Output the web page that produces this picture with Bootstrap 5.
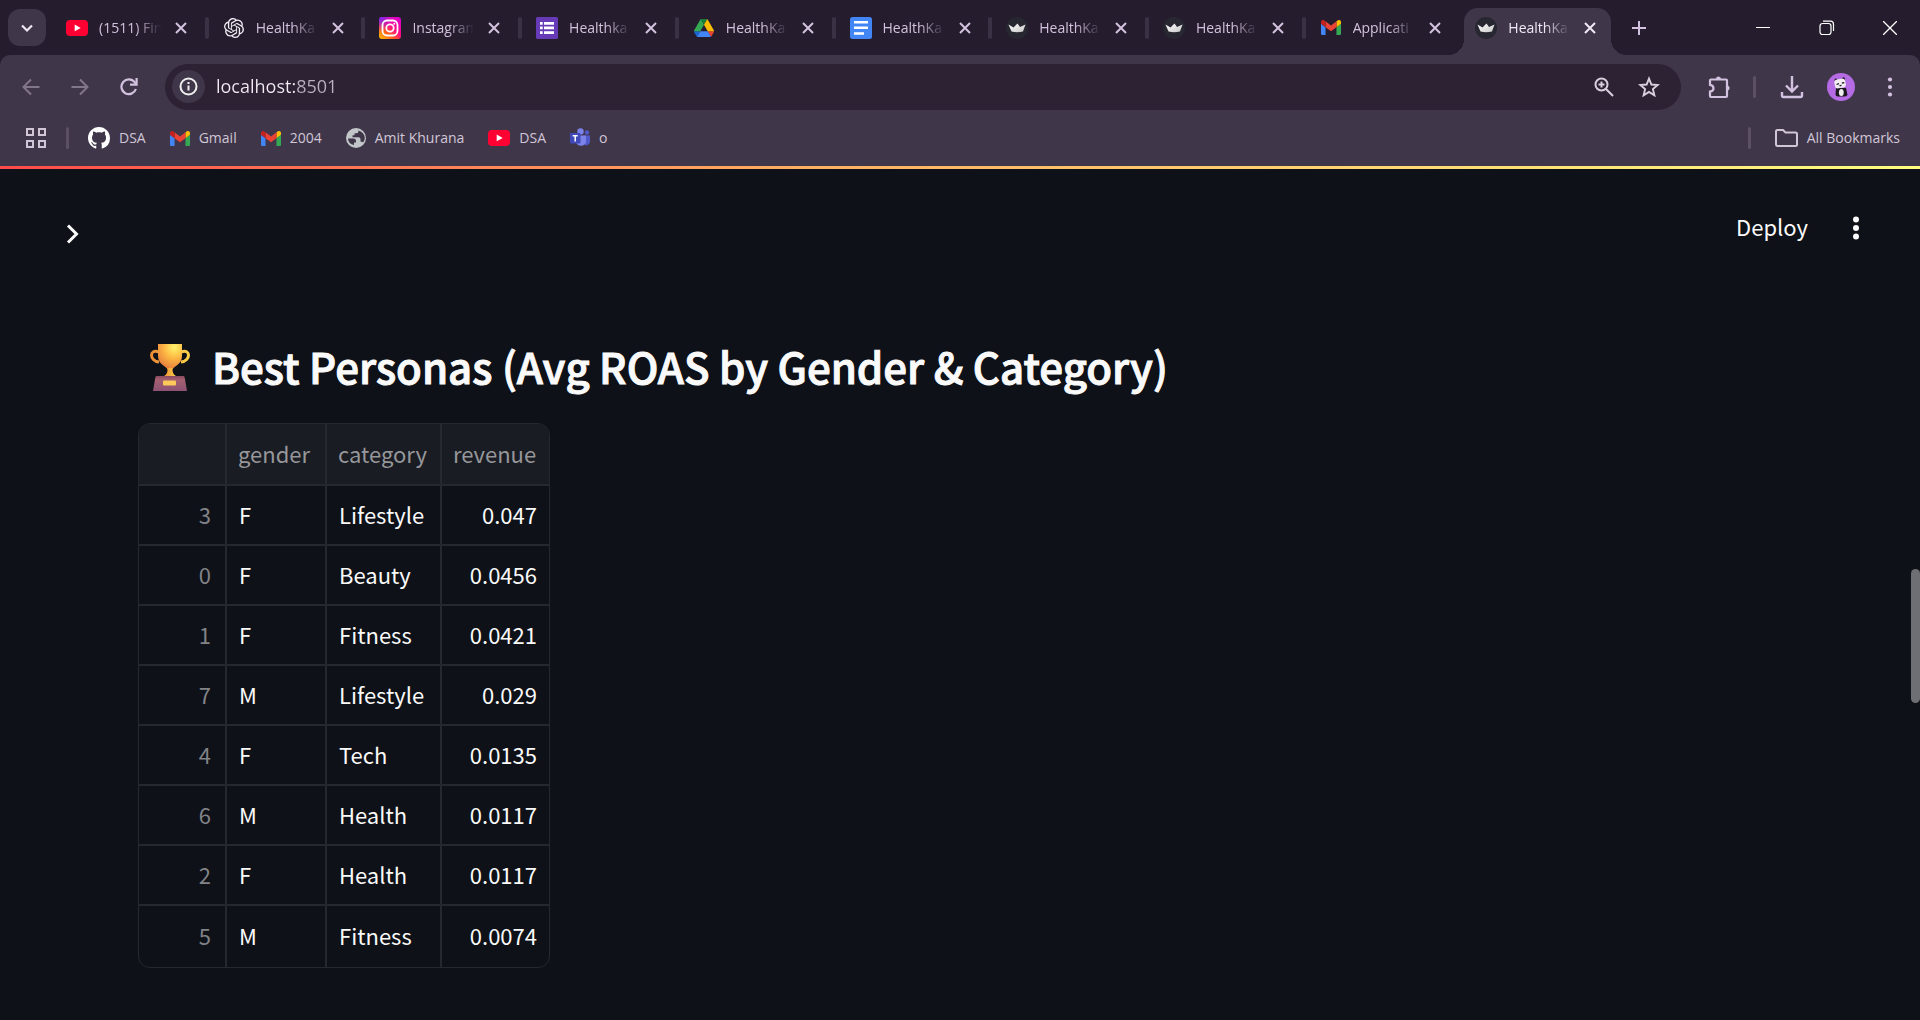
<!DOCTYPE html>
<html lang="en">
<head>
<meta charset="utf-8">
<meta name="viewport" content="width=device-width, initial-scale=1">
<title>HealthKart</title>
<link href="https://cdn.jsdelivr.net/npm/bootstrap@5.3.0/dist/css/bootstrap.min.css" rel="stylesheet">
<style>
:root{--strip:#251d2d;--bar:#40364a;--field:#2c2233;--lilac:#d3c2df;--page:#0e1117;--line:#25282d}
body{background:var(--page);color:#fafafa;font-family:"Open Sans","Noto Sans",sans-serif;font-size:14px;line-height:20px;overflow:hidden}
button{background:none;border:0;padding:0;color:inherit}
svg{display:block;flex:none}
.tabstrip{background:var(--strip);height:55px;color:var(--lilac)}
.tab-search{width:38px;height:37px;border-radius:12px;background:var(--bar);color:#eee6f3;margin:9px 6px 0 8px}
.browser-tab{flex:1 1 0;min-width:0;height:55px;position:relative}
.tab-main{height:55px;padding-left:14px;gap:11px}
.tab-title{width:70px;white-space:nowrap;text-align:left;-webkit-mask-image:linear-gradient(90deg,#000 36px,transparent 62px);mask-image:linear-gradient(90deg,#000 36px,transparent 62px)}
.tab-x{width:24px;height:24px}
.tab-sep{width:4px;height:22px;border-radius:2px;background:#3b3144}
.browser-tab.current .tab-shape{position:absolute;inset:8px 8px 0 2px;background:var(--bar);border-radius:14px 14px 0 0}
.tab-shape::before,.tab-shape::after{content:"";position:absolute;bottom:0;width:16px;height:16px}
.tab-shape::before{right:100%;background:radial-gradient(circle at 0 0,transparent 16px,var(--bar) 16px)}
.tab-shape::after{left:100%;background:radial-gradient(circle at 100% 0,transparent 16px,var(--bar) 16px)}
.current .tab-main,.current .tab-x{position:relative;color:#f0e8f5}
.current .tab-main{padding-left:13px}
.strip-end{width:301px}
.plus-btn{width:40px}
.win-btn{width:64px;height:55px;color:#fff}
.win-btn:last-child{width:61px}
.chrome-bars{background:var(--strip)}
.bars-inner{background:var(--bar);border-radius:10px 10px 0 0;height:111px}
.toolbar{height:65px;padding-bottom:2px;padding-left:6px;color:var(--lilac)}
.nav-btn{width:49px;height:40px}
.faded{color:#82768c}
.omnibox{height:46px;border-radius:23px;background:var(--field);margin-left:12px;padding:0 10px 0 7px;color:#d9d0de}
.site-info{width:33px;height:33px;border-radius:50%;background:var(--bar);color:#eee}
.address{border:0;outline:0;padding:0 0 1px 11px;background:linear-gradient(90deg,#f0ebf3 91px,#b9b0c1 91px);-webkit-background-clip:text;background-clip:text;color:transparent;font-size:18px;line-height:24px;min-width:0}
.end-btn{width:45px;height:40px}
.toolbar-end{width:239px;padding-left:15px}
.toolbar-end .divider{margin:0 13px 0 12px}
.divider{width:3px;height:22px;border-radius:2px;background:#5b5066}
.bookmarks{height:36px;color:#d0c6d6;padding-left:26px;padding-right:20px}
.bookmarks .apps-div{margin:0 19px 0 20px}
.bookmarks a{color:inherit;text-decoration:none;gap:9px}
.bookmark-set{gap:24px}
.load-line{height:3px;background:linear-gradient(90deg,#ff4b4b,#ffaf62 42%,#fffd80)}
.app-view{font-family:"Noto Sans CJK JP","Noto Sans",sans-serif}
.app-bar{height:118px;padding:0 54px 0 61px}
.expand-btn{margin-top:12px}
.app-actions{gap:38px}
.deploy{font-size:22px;line-height:32px;padding-bottom:4px}
.content-block{padding:57px 138px 0}
.block-title{font-size:42px;line-height:44px;font-weight:500;gap:22px;padding-left:12px;margin-bottom:31px;-webkit-text-stroke:1px #fafafa}
.grid-frame{border:1px solid var(--line);border-radius:12px;overflow:hidden;width:max-content}
.data-grid{border-collapse:separate;border-spacing:0;font-size:22px;line-height:30px}
.data-grid th,.data-grid td{height:60px;padding:0 12px 3px;border-right:2px solid var(--line);border-bottom:2px solid var(--line);font-weight:400;vertical-align:middle}
.data-grid thead th{height:62px;background:#1a1c23;color:#96979a;padding:0 11px 2px}
.data-grid tbody th{color:#818387;text-align:right;padding-right:14px}
.data-grid tr>:last-child{border-right:0}
.data-grid tbody tr:last-child>*{border-bottom:0;height:61px}
.data-grid td:last-child{text-align:right}
.scroll-thumb{position:fixed;right:0;top:569px;width:9px;height:134px;border-radius:5px;background:#6d6f74}
</style>
<script src="https://cdn.jsdelivr.net/npm/bootstrap@5.3.0/dist/js/bootstrap.bundle.min.js"></script>
</head>
<body>
<svg width="0" height="0" class="position-absolute" aria-hidden="true">
<defs>
<linearGradient id="insta" x1="0" y1="1" x2=".9" y2="0"><stop offset="0" stop-color="#ffc400"/><stop offset=".35" stop-color="#ff5a1f"/><stop offset=".6" stop-color="#ff0a8a"/><stop offset="1" stop-color="#d800d0"/></linearGradient>
<radialGradient id="insta2" cx="0" cy="0" r=".7"><stop offset="0" stop-color="#5b2bff"/><stop offset="1" stop-color="#9b20ff" stop-opacity="0"/></radialGradient>
<linearGradient id="silver" x1="0" x2="1" y1="0" y2="1"><stop offset="0" stop-color="#fff"/><stop offset="1" stop-color="#c8c8c8"/></linearGradient>
<radialGradient id="gold" cx=".68" cy=".12" r=".85"><stop offset="0" stop-color="#fff56b"/><stop offset=".5" stop-color="#fdb843"/><stop offset="1" stop-color="#e8803e"/></radialGradient>
<linearGradient id="handle" x1="0" x2="1"><stop offset="0" stop-color="#ea8c36"/><stop offset="1" stop-color="#fdd14a"/></linearGradient>
<linearGradient id="base" x1="0" y1="0" x2="0" y2="1"><stop offset="0" stop-color="#8a4a62"/><stop offset=".25" stop-color="#a4606f"/><stop offset="1" stop-color="#8c5175"/></linearGradient>
<symbol id="i-x" viewBox="0 0 12 12"><path d="M1 1l10 10M11 1L1 11" stroke="currentColor" stroke-width="2" fill="none"/></symbol>
<symbol id="i-yt" viewBox="0 0 22 16"><rect width="22" height="16" rx="4" fill="#ff0033"/><path d="M8.700 4.600v6.600l6-3.300z" fill="#fff"/></symbol>
<symbol id="i-gmail" viewBox="52 42 88 66"><path fill="#4285f4" d="M58 108h14V74L52 59v43c0 3.320 2.690 6 6 6"/><path fill="#34a853" d="M120 108h14c3.320 0 6-2.690 6-6V59l-20 15"/><path fill="#fbbc04" d="M120 48v26l20-15v-8c0-7.420-8.470-11.650-14.400-7.200"/><path fill="#ea4335" d="M72 74V48l24 18 24-18v26L96 92"/><path fill="#c5221f" d="M52 51v8l20 15V48l-5.600-4.200c-5.940-4.450-14.400-.220-14.400 7.200"/></symbol>
<symbol id="i-crown" viewBox="0 0 22 22"><circle cx="11" cy="11" r="11" fill="#262730"/><path d="M2.500 7.500L7.500 10.500 11.500 6.500 14 10 19.500 7.500 17 14.500Q11 16 5.500 14.500z" fill="url(#silver)"/></symbol>
</defs>
</svg>

<header>
<nav class="tabstrip d-flex" aria-label="Open tabs">
<button class="tab-search d-flex align-items-center justify-content-center" aria-label="Search tabs"><svg width="14" height="14" viewBox="0 0 14 14"><path d="M2 4.500l5 5 5-5" fill="none" stroke="currentColor" stroke-width="2.200"/></svg></button>

<div class="browser-tab d-flex align-items-center"><button class="tab-main d-flex align-items-center"><svg width="22" height="16"><use href="#i-yt"/></svg><span class="tab-title">(1511) Fin</span></button><button class="tab-x d-flex align-items-center justify-content-center" aria-label="Close tab"><svg width="12" height="12"><use href="#i-x"/></svg></button><span class="tab-sep ms-auto"></span></div>

<div class="browser-tab d-flex align-items-center"><button class="tab-main d-flex align-items-center"><svg width="22" height="20" viewBox="0 0 24 24" fill="#f4eef7"><path d="M22.2819 9.8211a5.9847 5.9847 0 0 0-.5157-4.9108 6.0462 6.0462 0 0 0-6.5098-2.9A6.0651 6.0651 0 0 0 4.9807 4.1818a5.9847 5.9847 0 0 0-3.9977 2.9 6.0462 6.0462 0 0 0 .7427 7.0966 5.98 5.98 0 0 0 .511 4.9107 6.051 6.051 0 0 0 6.5146 2.9001A5.9847 5.9847 0 0 0 13.2599 24a6.0557 6.0557 0 0 0 5.7718-4.2058 5.9894 5.9894 0 0 0 3.9977-2.9001 6.0557 6.0557 0 0 0-.7475-7.0729zm-9.022 12.6081a4.4755 4.4755 0 0 1-2.8764-1.0408l.1419-.0804 4.7783-2.7582a.7948.7948 0 0 0 .3927-.6813v-6.7369l2.02 1.1686a.071.071 0 0 1 .038.052v5.5826a4.504 4.504 0 0 1-4.4945 4.4944zm-9.6607-4.1254a4.4708 4.4708 0 0 1-.5346-3.0137l.142.0852 4.783 2.7582a.7712.7712 0 0 0 .7806 0l5.8428-3.3685v2.3324a.0804.0804 0 0 1-.0332.0615L9.74 19.9502a4.4992 4.4992 0 0 1-6.1408-1.6464zM2.3408 7.8956a4.485 4.485 0 0 1 2.3655-1.9728V11.6a.7664.7664 0 0 0 .3879.6765l5.8144 3.3543-2.0201 1.1685a.0757.0757 0 0 1-.071 0l-4.8303-2.7865A4.504 4.504 0 0 1 2.3408 7.872zm16.5963 3.8558L13.1038 8.364 15.1192 7.2a.0757.0757 0 0 1 .071 0l4.8303 2.7913a4.4944 4.4944 0 0 1-.6765 8.1042v-5.6772a.79.79 0 0 0-.407-.667zm2.0107-3.0231l-.142-.0852-4.7735-2.7818a.7759.7759 0 0 0-.7854 0L9.409 9.2297V6.8974a.0662.0662 0 0 1 .0284-.0615l4.8303-2.7866a4.4992 4.4992 0 0 1 6.6802 4.66zM8.3065 12.863l-2.02-1.1638a.0804.0804 0 0 1-.038-.0567V6.0742a4.4992 4.4992 0 0 1 7.3757-3.4537l-.142.0805L8.704 5.459a.7948.7948 0 0 0-.3927.6813zm1.0976-2.3654l2.602-1.4998 2.6069 1.4998v2.9994l-2.5974 1.4997-2.6067-1.4997Z"/></svg><span class="tab-title">HealthKa</span></button><button class="tab-x d-flex align-items-center justify-content-center" aria-label="Close tab"><svg width="12" height="12"><use href="#i-x"/></svg></button><span class="tab-sep ms-auto"></span></div>

<div class="browser-tab d-flex align-items-center"><button class="tab-main d-flex align-items-center"><svg width="22" height="22" viewBox="0 0 22 22"><rect width="22" height="22" rx="3" fill="url(#insta)"/><rect width="22" height="22" rx="3" fill="url(#insta2)"/><g fill="none" stroke="#fff" stroke-width="1.800"><rect x="3.500" y="3.500" width="15" height="15" rx="4.500"/><circle cx="11" cy="11" r="3.700"/></g><circle cx="15.300" cy="6.700" r="1" fill="#fff"/></svg><span class="tab-title">Instagram</span></button><button class="tab-x d-flex align-items-center justify-content-center" aria-label="Close tab"><svg width="12" height="12"><use href="#i-x"/></svg></button><span class="tab-sep ms-auto"></span></div>

<div class="browser-tab d-flex align-items-center"><button class="tab-main d-flex align-items-center"><svg width="22" height="22" viewBox="0 0 22 22"><rect width="22" height="22" rx="1.500" fill="#673ab7"/><path d="M4 5h2.700v2.700H4zM8 5h10v2.700H8zM4 9.600h2.700v2.700H4zM8 9.600h10v2.700H8zM4 14.200h2.700v2.700H4zM8 14.200h10v2.700H8z" fill="#fff"/></svg><span class="tab-title">Healthka</span></button><button class="tab-x d-flex align-items-center justify-content-center" aria-label="Close tab"><svg width="12" height="12"><use href="#i-x"/></svg></button><span class="tab-sep ms-auto"></span></div>

<div class="browser-tab d-flex align-items-center"><button class="tab-main d-flex align-items-center"><svg width="22" height="18" viewBox="0 0 87.3 78"><path d="m6.600 66.850 3.850 6.650c.8 1.400 1.950 2.500 3.300 3.300l13.750-23.800h-27.500c0 1.550.4 3.100 1.200 4.500z" fill="#1967d2"/><path d="m43.650 25-13.750-23.800c-1.350.8-2.500 1.900-3.300 3.300l-25.400 44a9.060 9.060 0 0 0 -1.200 4.500h27.500z" fill="#34a853"/><path d="m73.550 76.800c1.350-.8 2.500-1.900 3.300-3.300l1.600-2.750 7.650-13.250c.8-1.400 1.200-2.950 1.200-4.500h-27.500l5.850 11.500z" fill="#ea4335"/><path d="m43.650 25 13.750-23.800c-1.350-.8-2.900-1.200-4.500-1.200h-18.500c-1.600 0-3.150.45-4.500 1.200z" fill="#188038"/><path d="m59.800 53h-32.300l-13.750 23.800c1.350.8 2.900 1.200 4.500 1.200h50.800c1.600 0 3.150-.45 4.500-1.200z" fill="#4285f4"/><path d="m73.400 26.500-12.700-22c-.8-1.400-1.950-2.500-3.300-3.300l-13.750 23.800 16.150 28h27.450c0-1.550-.4-3.100-1.200-4.500z" fill="#fbbc04"/></svg><span class="tab-title">HealthKa</span></button><button class="tab-x d-flex align-items-center justify-content-center" aria-label="Close tab"><svg width="12" height="12"><use href="#i-x"/></svg></button><span class="tab-sep ms-auto"></span></div>

<div class="browser-tab d-flex align-items-center"><button class="tab-main d-flex align-items-center"><svg width="22" height="22" viewBox="0 0 22 22"><rect width="22" height="22" rx="2.500" fill="#4285f4"/><path d="M4 4h14v2.500H4zM4 9.600h14v2.500H4zM4 15.200h10v2.500H4z" fill="#fff"/></svg><span class="tab-title">HealthKa</span></button><button class="tab-x d-flex align-items-center justify-content-center" aria-label="Close tab"><svg width="12" height="12"><use href="#i-x"/></svg></button><span class="tab-sep ms-auto"></span></div>

<div class="browser-tab d-flex align-items-center"><button class="tab-main d-flex align-items-center"><svg width="22" height="22"><use href="#i-crown"/></svg><span class="tab-title">HealthKa</span></button><button class="tab-x d-flex align-items-center justify-content-center" aria-label="Close tab"><svg width="12" height="12"><use href="#i-x"/></svg></button><span class="tab-sep ms-auto"></span></div>

<div class="browser-tab d-flex align-items-center"><button class="tab-main d-flex align-items-center"><svg width="22" height="22"><use href="#i-crown"/></svg><span class="tab-title">HealthKa</span></button><button class="tab-x d-flex align-items-center justify-content-center" aria-label="Close tab"><svg width="12" height="12"><use href="#i-x"/></svg></button><span class="tab-sep ms-auto"></span></div>

<div class="browser-tab d-flex align-items-center"><button class="tab-main d-flex align-items-center"><svg width="22" height="15"><use href="#i-gmail"/></svg><span class="tab-title">Applicati</span></button><button class="tab-x d-flex align-items-center justify-content-center" aria-label="Close tab"><svg width="12" height="12"><use href="#i-x"/></svg></button></div>

<div class="browser-tab current d-flex align-items-center"><span class="tab-shape"></span><button class="tab-main d-flex align-items-center"><svg width="22" height="22"><use href="#i-crown"/></svg><span class="tab-title">HealthKa</span></button><button class="tab-x d-flex align-items-center justify-content-center" aria-label="Close tab"><svg width="12" height="12"><use href="#i-x"/></svg></button></div>

<div class="strip-end d-flex align-items-center">
<button class="plus-btn d-flex justify-content-center" aria-label="New tab"><svg width="14" height="14" viewBox="0 0 14 14"><path d="M7 0v14M0 7h14" stroke="currentColor" stroke-width="2"/></svg></button>
<button class="win-btn ms-auto d-flex align-items-center justify-content-center" aria-label="Minimize"><svg width="14" height="14" viewBox="0 0 14 14"><path d="M0 6.500h14" stroke="currentColor"/></svg></button>
<button class="win-btn d-flex align-items-center justify-content-center" aria-label="Restore"><svg width="16" height="16" viewBox="0 0 16 16" fill="none" stroke="currentColor" stroke-width="1.200"><rect x="1" y="3.500" width="11" height="11" rx="2.500"/><path d="M4 1.200h7.500a3 3 0 0 1 3 3V11"/></svg></button>
<button class="win-btn d-flex align-items-center justify-content-center" aria-label="Close window"><svg width="14" height="14" viewBox="0 0 14 14"><path d="M0 0l14 14M14 0L0 14" stroke="currentColor" stroke-width="1.300"/></svg></button>
</div>
</nav>

<div class="chrome-bars"><div class="bars-inner">
<div class="toolbar d-flex align-items-center">
<div class="d-flex">
<button class="nav-btn faded d-flex align-items-center justify-content-center" aria-label="Back"><svg width="18" height="18" viewBox="0 0 18 18" fill="none" stroke="currentColor" stroke-width="2"><path d="M17.500 9H2M9 1.500L1.500 9 9 16.500"/></svg></button>
<button class="nav-btn faded d-flex align-items-center justify-content-center" aria-label="Forward"><svg width="18" height="18" viewBox="0 0 18 18" fill="none" stroke="currentColor" stroke-width="2"><path d="M.5 9H16M9 1.500L16.500 9 9 16.500"/></svg></button>
<button class="nav-btn d-flex align-items-center justify-content-center" aria-label="Reload"><svg width="18" height="18" viewBox="0 0 18 18" fill="none" stroke="currentColor" stroke-width="2.200"><path d="M15.900 11A7.400 7.400 0 1 1 14.700 4.200L16 6"/><path d="M16.600 0v6.600H10"/></svg></button>
</div>
<div class="omnibox d-flex align-items-center flex-grow-1">
<button class="site-info d-flex align-items-center justify-content-center" aria-label="View site information"><svg width="19" height="19" viewBox="0 0 19 19" fill="none" stroke="currentColor" stroke-width="2"><circle cx="9.500" cy="9.500" r="8"/><path d="M9.500 8.500v5M9.500 5v2"/></svg></button>
<input class="address flex-grow-1" type="text" aria-label="Address" value="localhost:8501">
<button class="end-btn d-flex align-items-center justify-content-center" aria-label="Zoom"><svg width="20" height="20" viewBox="0 0 20 20" fill="none" stroke="currentColor" stroke-width="2"><circle cx="7.500" cy="7.500" r="6"/><path d="M12 12l7 7M7.500 4.500v6M4.500 7.500h6"/></svg></button>
<button class="end-btn d-flex align-items-center justify-content-center" aria-label="Bookmark this page"><svg width="22" height="21" viewBox="0 0 22 21" fill="none" stroke="currentColor" stroke-width="1.900"><path d="M11 2.600l2.400 5.900 6.300.5-4.800 4.100 1.500 6.200L11 15.900l-5.400 3.400 1.500-6.200L2.300 9l6.300-.5z"/></svg></button>
</div>
<div class="toolbar-end d-flex align-items-center">
<button class="d-flex justify-content-center end-btn align-items-center" aria-label="Extensions"><svg width="24" height="24" viewBox="0 0 24 24"><path d="M9 4a2.500 2.500 0 0 1 5 0zM20 10.500a2.500 2.500 0 0 1 0 5z" fill="currentColor"/><path d="M4 4.500h15q1 0 1 1v15.500q0 1-1 1H4q-1 0-1-1v-4.500q3.500-.5 3.500-3.300T3 9.900V5.500q0-1 1-1z" fill="none" stroke="currentColor" stroke-width="2.200"/></svg></button>
<span class="divider"></span>
<button class="end-btn d-flex align-items-center justify-content-center" aria-label="Downloads"><svg width="24" height="24" viewBox="0 0 24 24" fill="none" stroke="currentColor" stroke-width="2.400"><path d="M12 1v15M6 10.500l6 6 6-6M2 17v3.500q0 1.500 1.500 1.500h17q1.500 0 1.500-1.500V17"/></svg></button>
<button class="ms-1 end-btn d-flex align-items-center justify-content-center" aria-label="Profile"><svg width="28" height="28" viewBox="0 0 28 28"><circle cx="14" cy="14" r="14" fill="#b56be3"/><path d="M9 15h10l1.500 7q-1.500 2-5 1.500h-4q-2.500.5-3-2z" fill="#1d1720"/><ellipse cx="14.300" cy="19.500" rx="2.400" ry="3.500" fill="#eee"/><circle cx="9" cy="7" r="1.500" fill="#1d1720"/><circle cx="16.500" cy="5.800" r="1.500" fill="#1d1720"/><rect x="7.500" y="6" width="11" height="9" rx="3" fill="#f2eef2" transform="rotate(-10 13 10)"/><path d="M9.500 11.500l2.500-.8M14.800 10.200l2.500-.6M12.500 12.800l2-.4" stroke="#1d1720" stroke-width="1.300"/></svg></button>
<button class="end-btn ms-1 d-flex align-items-center justify-content-center" aria-label="Browser menu"><svg width="6" height="20" viewBox="0 0 6 20" fill="currentColor"><circle cx="3" cy="2.500" r="2.100"/><circle cx="3" cy="10" r="2.100"/><circle cx="3" cy="17.500" r="2.100"/></svg></button>
</div>
</div>

<nav class="bookmarks d-flex align-items-center" aria-label="Bookmarks">
<button aria-label="Apps"><svg width="20" height="20" viewBox="0 0 20 20" fill="none" stroke="currentColor" stroke-width="2"><path d="M1 1h6v6H1zM13 1h6v6h-6zM1 13h6v6H1zM13 13h6v6h-6z"/></svg></button>
<span class="divider apps-div"></span>
<div class="bookmark-set d-flex align-items-center">
<a href="#" class="d-flex align-items-center"><svg width="22" height="22" viewBox="0 0 16 16" fill="#fff"><path d="M8 0C3.580 0 0 3.580 0 8c0 3.540 2.290 6.530 5.470 7.590.4.070.55-.17.55-.38 0-.19-.01-.82-.01-1.490-2.010.37-2.530-.49-2.690-.94-.09-.23-.48-.94-.82-1.130-.28-.15-.68-.52-.01-.53.63-.01 1.080.58 1.230.82.72 1.210 1.870.87 2.330.66.07-.52.28-.87.51-1.070-1.780-.2-3.640-.89-3.640-3.950 0-.87.31-1.590.82-2.150-.08-.2-.36-1.020.08-2.120 0 0 .67-.21 2.200.82.64-.18 1.320-.27 2-.27s1.360.09 2 .27c1.530-1.040 2.200-.82 2.200-.82.44 1.100.16 1.920.08 2.120.51.56.82 1.270.82 2.150 0 3.070-1.870 3.750-3.650 3.950.29.25.54.73.54 1.480 0 1.070-.01 1.930-.01 2.200 0 .21.15.46.55.38A8.010 8.010 0 0 0 16 8c0-4.420-3.580-8-8-8"/></svg>DSA</a>
<a href="#" class="d-flex align-items-center"><svg width="20" height="15"><use href="#i-gmail"/></svg>Gmail</a>
<a href="#" class="d-flex align-items-center"><svg width="20" height="15"><use href="#i-gmail"/></svg>2004</a>
<a href="#" class="d-flex align-items-center"><svg width="20" height="20" viewBox="0 0 20 20"><circle cx="10" cy="10" r="10" fill="#c3c6c9"/><path d="M2 10.500h5.500q2.500 0 2.500 2.500v1.500H8V17q-5.500-1-6-6.500zM12.500 2.500v.8q0 2-2 2h-2v2h-2v2h6q2 0 2 2v2.500h1.300q1 0 1.400.8 3.500-5.500-.5-9.500-1.700-2-4.200-2.600z" fill="#40364a"/></svg>Amit Khurana</a>
<a href="#" class="d-flex align-items-center"><svg width="22" height="16"><use href="#i-yt"/></svg>DSA</a>
<a href="#" class="d-flex align-items-center"><svg width="20" height="20" viewBox="0 0 20 20"><circle cx="10.500" cy="3.500" r="3.200" fill="#7b83eb"/><circle cx="17" cy="4.500" r="2.200" fill="#5059c9"/><path d="M13 7.500h7v6a4 4 0 0 1-5 3.800z" fill="#5059c9"/><path d="M6 7.500h10V14a5.200 5.200 0 0 1-10 0z" fill="#7b83eb"/><rect y="5" width="10.500" height="10.500" rx="1" fill="#4049b8"/><path d="M2.700 7.800h5M5.200 8v5.500" stroke="#fff" stroke-width="1.500"/></svg>o</a>
</div>
<span class="divider ms-auto me-4"></span>
<a href="#" class="d-flex align-items-center"><svg width="23" height="18" viewBox="0 0 23 18" fill="none" stroke="currentColor" stroke-width="2"><path d="M1 15V2.500Q1 1 2.500 1H8l2.500 2.500h10Q22 3.500 22 5v10.500Q22 17 20.500 17h-18Q1 17 1 15z"/></svg>All Bookmarks</a>
</nav>
</div></div>
</header>

<div class="load-line"></div>
<main class="app-view">
<div class="app-bar d-flex align-items-center justify-content-between">
<button class="expand-btn" aria-label="Expand sidebar"><svg width="24" height="24" viewBox="0 0 24 24"><path d="M7 3.500l8.500 8.500L7 20.500" fill="none" stroke="currentColor" stroke-width="3"/></svg></button>
<div class="app-actions d-flex align-items-center"><button class="deploy">Deploy</button><button aria-label="App menu"><svg width="20" height="24" viewBox="0 0 20 24" fill="currentColor"><circle cx="10" cy="3.500" r="3"/><circle cx="10" cy="12" r="3"/><circle cx="10" cy="20.500" r="3"/></svg></button></div>
</div>
<section class="content-block">
<h3 class="block-title d-flex align-items-start"><svg width="40" height="48" viewBox="0 0 40 48"><path d="M9 8C-1 4-1 17 9 18M31 8c10-4 10 9 0 10" fill="none" stroke="url(#handle)" stroke-width="3"/><path d="M8 0h24v12q0 6-6 10-3 2-4 4h-4q-1-2-4-4-6-4-6-10z" fill="url(#gold)"/><path d="M17.500 24h5q-.5 6 3.500 8H14q4-2 3.500-8z" fill="url(#handle)"/><path d="M6.500 32h27q1 0 1.300 2L37 47H3l2.200-13q.3-2 1.300-2z" fill="url(#base)"/><rect x="13" y="36.500" width="13" height="5" rx="1" fill="#fcc95a"/></svg><span>Best Personas (Avg ROAS by Gender &amp; Category)</span></h3>
<div class="grid-frame">
<table class="data-grid">
<colgroup><col style="width:88px"><col style="width:100px"><col style="width:115px"><col style="width:107px"></colgroup>
<thead><tr><th scope="col" aria-label="index"></th><th scope="col">gender</th><th scope="col">category</th><th scope="col">revenue</th></tr></thead>
<tbody>
<tr><th scope="row">3</th><td>F</td><td>Lifestyle</td><td>0.047</td></tr>
<tr><th scope="row">0</th><td>F</td><td>Beauty</td><td>0.0456</td></tr>
<tr><th scope="row">1</th><td>F</td><td>Fitness</td><td>0.0421</td></tr>
<tr><th scope="row">7</th><td>M</td><td>Lifestyle</td><td>0.029</td></tr>
<tr><th scope="row">4</th><td>F</td><td>Tech</td><td>0.0135</td></tr>
<tr><th scope="row">6</th><td>M</td><td>Health</td><td>0.0117</td></tr>
<tr><th scope="row">2</th><td>F</td><td>Health</td><td>0.0117</td></tr>
<tr><th scope="row">5</th><td>M</td><td>Fitness</td><td>0.0074</td></tr>
</tbody>
</table>
</div>
</section>
</main>
<div class="scroll-thumb"></div>
</body>
</html>
